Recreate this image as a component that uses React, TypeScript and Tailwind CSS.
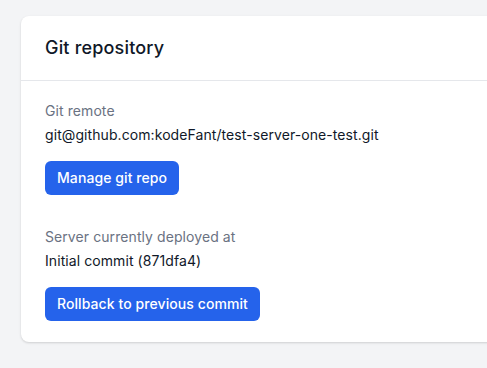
export default function App() {
  return (
    <div
      className="min-h-screen w-full overflow-hidden bg-[#f3f4f6] pl-[21px] pt-4"
      style={{ fontFamily: "Inter, 'Noto Sans', sans-serif" }}
    >
      <div className="w-[640px] rounded-lg bg-white shadow-[0_1px_3px_rgba(0,0,0,0.1),0_1px_2px_rgba(0,0,0,0.06)]">
        <div className="flex h-[65px] items-center border-b border-gray-200 px-6">
          <h2 className="text-lg font-medium tracking-[0.01em] text-gray-900">Git repository</h2>
        </div>
        <div className="px-6 pt-5 pb-[21px] tracking-[0.005em]">
          <p className="text-sm text-gray-500">Git remote</p>
          <p className="mt-1 text-sm text-gray-900">git@github.com:kodeFant/test-server-one-test.git</p>
          <button className="mt-4 rounded-md bg-[#2563eb] px-3 py-[7px] text-sm font-medium text-white">
            Manage git repo
          </button>

          <p className="mt-8 text-sm text-gray-500">Server currently deployed at</p>
          <p className="mt-1 text-sm text-gray-900">Initial commit (871dfa4)</p>
          <button className="mt-4 rounded-md bg-[#2563eb] px-3 py-[7px] text-sm font-medium text-white">
            Rollback to previous commit
          </button>
        </div>
      </div>
    </div>
  );
}
